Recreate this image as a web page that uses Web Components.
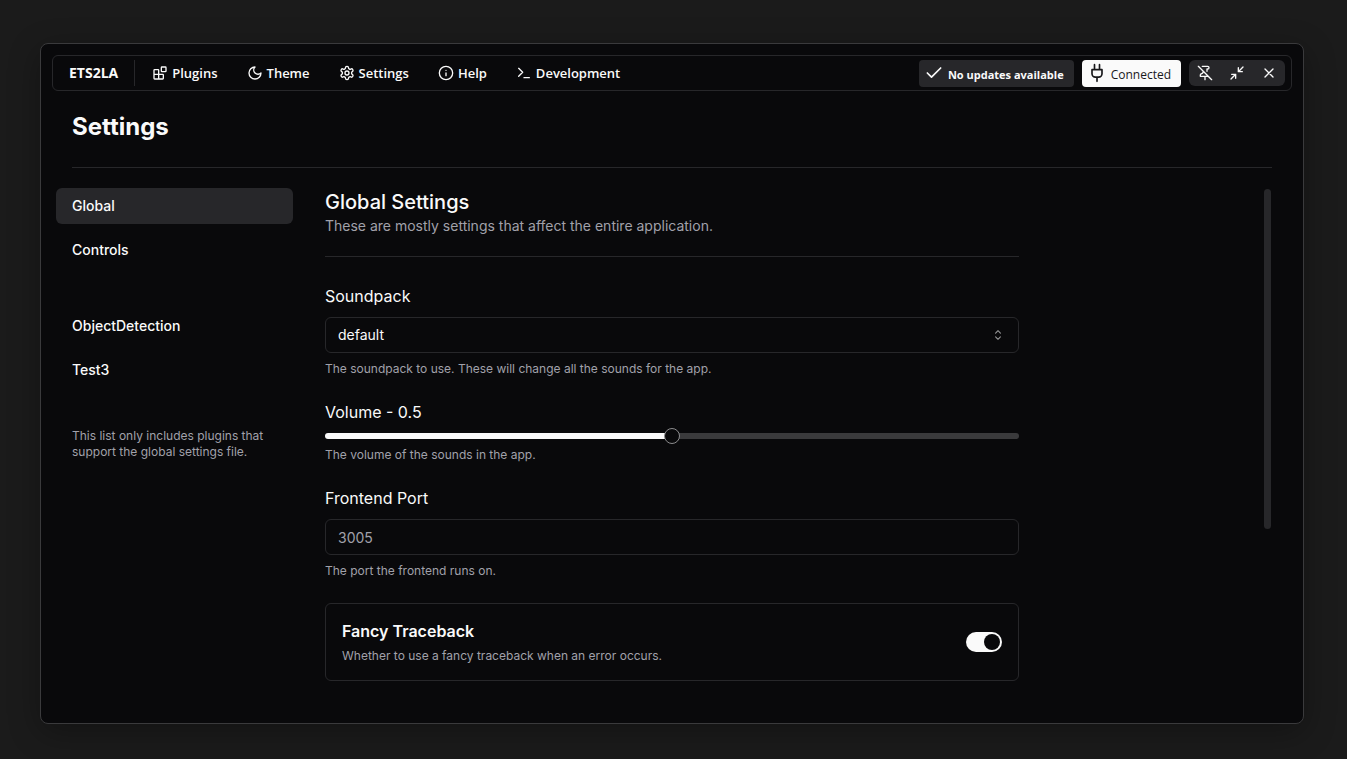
<!DOCTYPE html>
<html lang="en">
<head>
<meta charset="utf-8">
<title>ETS2LA - Settings</title>
<style>
  :root {
    --bg: #09090b;
    --fg: #fafafa;
    --muted: #a1a1aa;
    --accent: #27272a;
    --line: #27272a;
    --ui: "Open Sans", "Noto Sans", sans-serif;
    --body: Inter, "Liberation Sans", sans-serif;
  }
  body {
    margin: 0;
    min-height: 100vh;
    display: flex;
    background: #1b1b1b;
    color: var(--fg);
    font: 14px/20px var(--body);
  }
</style>
</head>
<body>
<app-window>
  <menu-bar slot="bar">
    <menu-item icon="blocks">Plugins</menu-item>
    <menu-item icon="moon">Theme</menu-item>
    <menu-item icon="settings">Settings</menu-item>
    <menu-item icon="info">Help</menu-item>
    <menu-item icon="terminal">Development</menu-item>
    <status-chip slot="status" icon="check">No updates available</status-chip>
    <status-chip slot="status" icon="plug" light>Connected</status-chip>
    <window-controls slot="status"></window-controls>
  </menu-bar>
  <settings-page heading="Settings">
    <side-nav slot="nav">
      <nav-item active>Global</nav-item>
      <nav-item>Controls</nav-item>
      <nav-item slot="plugins">ObjectDetection</nav-item>
      <nav-item slot="plugins">Test3</nav-item>
      <span slot="note">This list only includes plugins that support the global settings file.</span>
    </side-nav>
    <settings-section heading="Global Settings" summary="These are mostly settings that affect the entire application.">
      <select-field label="Soundpack" value="default" hint="The soundpack to use. These will change all the sounds for the app."></select-field>
      <slider-field label="Volume" value="0.5" hint="The volume of the sounds in the app."></slider-field>
      <text-field label="Frontend Port" placeholder="3005" hint="The port the frontend runs on."></text-field>
      <switch-card label="Fancy Traceback" hint="Whether to use a fancy traceback when an error occurs."></switch-card>
    </settings-section>
  </settings-page>
</app-window>

<script>
const ICONS = {
  blocks: '<rect width="7" height="7" x="14" y="3" rx="1"/><path d="M10 21V8a1 1 0 0 0-1-1H4a1 1 0 0 0-1 1v12a1 1 0 0 0 1 1h12a1 1 0 0 0 1-1v-5a1 1 0 0 0-1-1H3"/>',
  moon: '<path d="M12 3a6 6 0 0 0 9 9 9 9 0 1 1-9-9Z"/>',
  settings: '<path d="M12.22 2h-.44a2 2 0 0 0-2 2v.18a2 2 0 0 1-1 1.73l-.43.25a2 2 0 0 1-2 0l-.15-.08a2 2 0 0 0-2.73.73l-.22.38a2 2 0 0 0 .73 2.73l.15.1a2 2 0 0 1 1 1.72v.51a2 2 0 0 1-1 1.74l-.15.09a2 2 0 0 0-.73 2.73l.22.38a2 2 0 0 0 2.73.73l.15-.08a2 2 0 0 1 2 0l.43.25a2 2 0 0 1 1 1.73V20a2 2 0 0 0 2 2h.44a2 2 0 0 0 2-2v-.18a2 2 0 0 1 1-1.73l.43-.25a2 2 0 0 1 2 0l.15.08a2 2 0 0 0 2.73-.73l.22-.39a2 2 0 0 0-.73-2.73l-.15-.08a2 2 0 0 1-1-1.74v-.5a2 2 0 0 1 1-1.74l.15-.09a2 2 0 0 0 .73-2.73l-.22-.38a2 2 0 0 0-2.73-.73l-.15.08a2 2 0 0 1-2 0l-.43-.25a2 2 0 0 1-1-1.73V4a2 2 0 0 0-2-2z"/><circle cx="12" cy="12" r="3"/>',
  info: '<circle cx="12" cy="12" r="10"/><path d="M12 16v-4M12 8h.01"/>',
  terminal: '<path d="m4 17 6-6-6-6M12 19h8"/>',
  check: '<path d="M20 6 9 17l-5-5"/>',
  plug: '<path d="M12 22v-5M9 8V2M15 8V2M18 8v5a4 4 0 0 1-4 4h-4a4 4 0 0 1-4-4V8Z"/>',
  pinOff: '<path d="M2 2l20 20M12 17v5M9 9v1.76a2 2 0 0 1-1.11 1.79l-1.78.9A2 2 0 0 0 5 15.24V17h12M15 9.34V6h1a2 2 0 0 0 0-4H7.89"/>',
  shrink: '<path d="M4 14h6v6M20 10h-6V4M14 10l7-7M3 21l7-7"/>',
  close: '<path d="M18 6 6 18M6 6l12 12"/>'
};
const icon = (name, size) =>
  `<svg width="${size}" height="${size}" viewBox="0 0 24 24" fill="none" stroke="currentColor" stroke-width="2" stroke-linecap="round" stroke-linejoin="round" aria-hidden="true">${ICONS[name]}</svg>`;

const BASE = `*, *::before { box-sizing: border-box; } svg { display: block; flex: none; } button { font: inherit; color: inherit; border: 0; background: none; padding: 0; margin: 0; }`;
const FIELD = `
  :host { display: grid; gap: 8px; }
  label { padding-bottom: 2px; font-size: 16px; line-height: 22px; justify-self: start; }
  p { margin: 0; font-size: 12px; line-height: 16px; color: var(--muted); }
  .box { width: 100%; height: 36px; margin: 0; padding: 0 12px; border: 1px solid var(--line);
         border-radius: 6px; background: transparent; color: var(--fg); font: 14px/20px var(--body); outline: none; }`;

function define(name, css, html) {
  customElements.define(name, class extends HTMLElement {
    connectedCallback() {
      if (this.shadowRoot) return;
      const get = key => this.getAttribute(key) || '';
      this.attachShadow({ mode: 'open' }).innerHTML = `<style>${BASE}${css}</style>${html(get)}`;
    }
  });
}

define('app-window', `
  :host { flex: 1; display: flex; flex-direction: column; gap: 20px; box-sizing: border-box; min-width: 0;
          margin: 43px 43px 35px 40px; padding: 11px; border: 1px solid #3a3a3c; border-radius: 8px;
          background: var(--bg); box-shadow: 0 8px 32px rgba(0, 0, 0, .3); }`,
  () => `<slot name="bar"></slot><slot></slot>`);

define('menu-bar', `
  :host { display: flex; align-items: center; justify-content: space-between; box-sizing: border-box; height: 36px;
          padding: 0 6px 0 16px; border: 1px solid var(--line); border-radius: 6px; font: 600 13px/20px var(--ui); }
  nav, .status { display: flex; align-items: center; }
  nav { gap: 5px; }
  .status { gap: 8px; }
  strong { font-size: 14px; font-weight: 700; padding-right: 11px; }
  hr { width: 1px; height: 26px; margin: 0; border: 0; background: var(--line); }`,
  () => `<nav><strong>ETS2LA</strong><hr><slot></slot></nav><div class="status"><slot name="status"></slot></div>`);

define('menu-item', `
  :host { display: block; }
  button { display: flex; align-items: center; gap: 4px; padding: 4px 12px; }`,
  get => `<button type="button">${icon(get('icon'), 16)}<slot></slot></button>`);

define('status-chip', `
  :host { display: block; }
  button { display: flex; align-items: center; gap: 4px; height: 27px; padding: 0 10px 0 5px; border-radius: 4px;
           background: var(--accent); font-size: 11px; font-weight: 700; }
  span { padding-top: 3px; }
  :host([light]) button { background: var(--fg); color: #18181b; font-size: 12px; font-weight: 400; }`,
  get => `<button type="button">${icon(get('icon'), 20)}<span><slot></slot></span></button>`);

define('window-controls', `
  :host { display: flex; border-radius: 6px; background: var(--accent); }
  button { display: grid; place-items: center; width: 32px; height: 26px; }`,
  () => [['pinOff', 'Unpin'], ['shrink', 'Shrink'], ['close', 'Close']]
    .map(([name, label]) => `<button type="button" aria-label="${label}">${icon(name, 16)}</button>`).join(''));

define('settings-page', `
  :host { flex: 1; display: flex; flex-direction: column; padding: 0 20px 8px 4px; }
  h1 { margin: 0 0 24px 16px; font-size: 24px; line-height: 32px; font-weight: 700; }
  hr { width: auto; height: 1px; margin: 0 0 20px 16px; border: 0; background: var(--line); }
  .columns { flex: 1; display: grid; grid-template-columns: 237fr 694fr 221fr; gap: 32px; }
  .scroll { justify-self: end; width: 8px; height: 100%; padding: 1px 1px 0 0; }
  .thumb { height: 66%; border-radius: 4px; background: var(--line); }`,
  get => `<h1>${get('heading')}</h1><hr>
    <div class="columns"><slot name="nav"></slot><slot></slot>
      <div class="scroll"><div class="thumb"></div></div></div>`);

define('side-nav', `
  :host { display: flex; flex-direction: column; gap: 40px; min-width: 0; }
  nav { display: grid; gap: 8px; }
  p { margin: 0; padding: 0 16px; font-size: 12px; line-height: 16px; color: var(--muted); }`,
  () => `<nav aria-label="Settings"><slot></slot></nav><nav aria-label="Plugins"><slot name="plugins"></slot></nav>
    <p><slot name="note"></slot></p>`);

define('nav-item', `
  :host { display: block; }
  a { display: block; padding: 8px 16px; border-radius: 6px; color: var(--fg); font-weight: 500; text-decoration: none; }
  :host([active]) a { background: var(--accent); }`,
  () => `<a href="#"><slot></slot></a>`);

define('settings-section', `
  :host { display: block; min-width: 0; }
  h2 { margin: 0; font-size: 20px; line-height: 28px; font-weight: 500; }
  p { margin: 0; color: var(--muted); }
  hr { height: 1px; margin: 20px 0 28px; border: 0; background: var(--line); }
  .fields { display: grid; gap: 24px; }`,
  get => `<h2>${get('heading')}</h2><p>${get('summary')}</p><hr><div class="fields"><slot></slot></div>`);

define('select-field', `${FIELD}
  .wrap { display: grid; align-items: center; }
  .wrap > * { grid-area: 1 / 1; }
  select { appearance: none; font-weight: 500; }
  svg { justify-self: end; margin-right: 13px; opacity: .6; pointer-events: none; }`,
  get => `<label for="control">${get('label')}</label>
    <div class="wrap"><select class="box" id="control"><option>${get('value')}</option></select>
    <svg width="16" height="16" viewBox="0 0 15 15" fill="none" stroke="currentColor" stroke-linecap="round" stroke-linejoin="round" aria-hidden="true"><path d="M5.25 5.75 7.5 3.5l2.25 2.25M5.25 9.25 7.5 11.5l2.25-2.25"/></svg></div>
    <p>${get('hint')}</p>`);

define('slider-field', `${FIELD}
  input { appearance: none; display: block; width: 100%; height: 6px; margin: 0; border-radius: 3px; outline: none;
          background: linear-gradient(to right, var(--fg) 50%, #3a3a3c 50%); }
  input::-webkit-slider-thumb { appearance: none; width: 16px; height: 16px; border: 1px solid #8c8c8e;
          border-radius: 50%; background: var(--bg); }`,
  get => `<label for="control">${get('label')} - ${get('value')}</label>
    <input type="range" id="control" min="0" max="1" step="0.1" value="${get('value')}"><p>${get('hint')}</p>`);

define('text-field', `${FIELD}
  input::placeholder { color: var(--muted); opacity: 1; }`,
  get => `<label for="control">${get('label')}</label>
    <input class="box" type="text" id="control" placeholder="${get('placeholder')}"><p>${get('hint')}</p>`);

define('switch-card', `
  :host { display: flex; align-items: center; justify-content: space-between; padding: 16px;
          border: 1px solid var(--line); border-radius: 6px; }
  .text { display: grid; gap: 4px; }
  label { padding-bottom: 2px; font-size: 16px; line-height: 22px; font-weight: 600; }
  p { margin: 0; font-size: 12px; line-height: 16px; color: var(--muted); }
  input { appearance: none; flex: none; display: flex; justify-content: flex-end; width: 36px; height: 20px; margin: 0;
          padding: 2px; border-radius: 10px; background: var(--fg); }
  input:not(:checked) { justify-content: flex-start; background: var(--line); }
  input::before { content: ""; width: 16px; height: 16px; border-radius: 50%; background: var(--bg); }`,
  get => `<div class="text"><label for="control">${get('label')}</label><p>${get('hint')}</p></div>
    <input type="checkbox" role="switch" id="control" checked>`);
</script>
</body>
</html>
